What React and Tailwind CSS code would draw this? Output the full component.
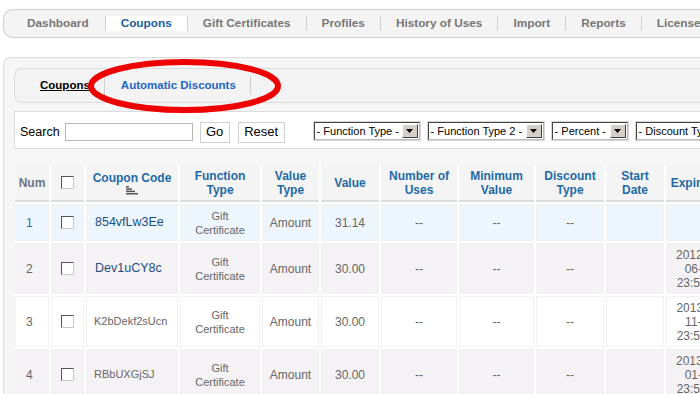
import React from 'react';

const navItems = ['Dashboard', 'Coupons', 'Gift Certificates', 'Profiles', 'History of Uses', 'Import', 'Reports', 'License'];

const cols = 'grid grid-cols-[34px_33px_92px_80px_57px_58px_76px_75px_68px_58px_68px] gap-x-[2px]';

const rows = [
  { num: '1', code: '854vfLw3Ee', link: true, value: '31.14', exp: null, bg: 'bg-[#eef6fd]', h: 'h-[37px]', numColor: 'text-[#2f7196]' },
  { num: '2', code: 'Dev1uCY8c', link: true, value: '30.00', exp: ['2012-06-', '06-30', '23:59:59'], bg: 'bg-[#f5f2f5]', h: 'h-[51px]', numColor: 'text-[#666]' },
  { num: '3', code: 'K2bDekf2sUcn', link: false, value: '30.00', exp: ['2013-11-', '11-30', '23:59:59'], bg: 'bg-white', h: 'h-[51px]', numColor: 'text-[#666]' },
  { num: '4', code: 'RBbUXGjSJ', link: false, value: '30.00', exp: ['2013-01-', '01-31', '23:59:59'], bg: 'bg-[#f5f2f5]', h: 'h-[51px]', numColor: 'text-[#666]' },
];

function Checkbox() {
  return (
    <span className="inline-block w-[13px] h-[13px] bg-white border border-t-[#555] border-l-[#555] border-b-[#c8c8c8] border-r-[#c8c8c8]" />
  );
}

function FakeSelect({ label, width }) {
  return (
    <div
      className="flex items-stretch h-[18px] bg-white border border-t-[#444] border-l-[#444] border-b-[#bbb] border-r-[#bbb] shadow-[0_0_0_1px_#d6d6d6]"
      style={{ width }}
    >
      <span className="flex-1 pl-[2px] text-[11px] leading-[16px] text-black whitespace-nowrap overflow-hidden">{label}</span>
      <span className="w-[16px] my-[1px] mr-[1px] flex items-center justify-center bg-[#d4d0c8] border border-t-[#fff] border-l-[#fff] border-b-[#404040] border-r-[#404040]">
        <svg width="7" height="4" viewBox="0 0 7 4"><path d="M0 0h7L3.5 4z" fill="#000" /></svg>
      </span>
    </div>
  );
}

function SortIcon() {
  return (
    <svg width="12" height="9" viewBox="0 0 12 9" className="mx-auto mt-[1px]">
      <rect x="0" y="0" width="3" height="1.5" fill="#555" />
      <rect x="0" y="2.3" width="6" height="1.5" fill="#555" />
      <rect x="0" y="4.6" width="9" height="1.5" fill="#555" />
      <rect x="0" y="7" width="12" height="1.5" fill="#555" />
    </svg>
  );
}

export default function App() {
  const hd = 'bg-[#f4f4f4] border-b-2 border-[#dcdcdc] flex flex-col items-center justify-center text-center text-[12px] leading-[14px] font-bold';
  return (
    <div className="relative w-[700px] h-[394px] overflow-hidden bg-white font-['Liberation_Sans',Arial,sans-serif]">
      {/* top navigation */}
      <div className="mt-[9px] ml-[3px] w-[760px] h-[29px] flex items-center rounded-l-[10px] border border-r-0 border-[#cfcfcf] bg-[#f4f4f4] whitespace-nowrap">
        {navItems.map((item, i) => (
          <div
            key={item}
            className={`h-[15px] flex items-center text-[11.8px] font-bold ${i === 0 ? 'pl-[23px] pr-[16px]' : 'px-[15px] border-l border-[#cfcfcf]'} ${item === 'Coupons' ? 'bg-white text-[#1b5f9e]' : 'text-[#777]'}`}
          >
            {item}
          </div>
        ))}
      </div>

      {/* main panel */}
      <div className="mt-[19px] ml-[3px] w-[760px] h-[400px] rounded-tl-[8px] border border-r-0 border-[#dcdcdc] bg-[#f6f6f6] pl-[10px] pt-[10px]">
        {/* sub tabs */}
        <div className="h-[35px] flex items-center rounded-l-[8px] border border-r-0 border-[#dcdcdc] bg-[#f3f3f3] whitespace-nowrap">
          <div className="pl-[25px] pr-[14px] text-[11.5px] font-bold text-black underline">Coupons</div>
          <div className="h-[19px] border-l border-[#cfcfcf]" />
          <div className="pl-[16px] pr-[14px] text-[11.5px] font-bold text-[#2166c4]">Automatic Discounts</div>
          <div className="h-[19px] border-l border-[#cfcfcf]" />
        </div>

        {/* search bar */}
        <div className="mt-[8px] h-[38px] flex items-center bg-white border border-r-0 border-[#dcdcdc] pl-[5px] pt-[4px] whitespace-nowrap">
          <span className="text-[12.5px] text-black">Search</span>
          <span className="ml-[5px] w-[128px] h-[18px] border border-[#b5b5b5] bg-white" />
          <span className="ml-[7px] w-[30px] h-[21px] flex items-center justify-center border border-[#cfcfcf] bg-white text-[13px] text-black">Go</span>
          <span className="ml-[8px] w-[47px] h-[21px] flex items-center justify-center border border-[#cfcfcf] bg-white text-[13px] text-black">Reset</span>
          <div className="ml-[29px] flex gap-[8px] -mt-[3px]">
            <FakeSelect label="- Function Type -" width={106} />
            <FakeSelect label="- Function Type 2 -" width={116} />
            <FakeSelect label="- Percent -" width={76} />
            <FakeSelect label="- Discount Type -" width={120} />
          </div>
        </div>

        {/* table */}
        <div className="mt-[16px] ml-[1px] bg-white flex flex-col gap-y-[2px] w-[740px]">
          <div className={`${cols} h-[37px]`}>
            <div className={`${hd} text-[#6a7888]`}>Num</div>
            <div className={hd}><Checkbox /></div>
            <div className={`${hd} text-[#1e6aa6] justify-start pt-[6px]`}>
              <span>Coupon Code</span>
              <SortIcon />
            </div>
            <div className={`${hd} text-[#1e6aa6]`}><span>Function</span><span>Type</span></div>
            <div className={`${hd} text-[#1e6aa6]`}><span>Value</span><span>Type</span></div>
            <div className={`${hd} text-[#1e6aa6]`}>Value</div>
            <div className={`${hd} text-[#1e6aa6]`}><span>Number of</span><span>Uses</span></div>
            <div className={`${hd} text-[#1e6aa6]`}><span>Minimum</span><span>Value</span></div>
            <div className={`${hd} text-[#1e6aa6]`}><span>Discount</span><span>Type</span></div>
            <div className={`${hd} text-[#1e6aa6]`}><span>Start</span><span>Date</span></div>
            <div className={`${hd} text-[#1e6aa6] whitespace-nowrap`}>Expiration</div>
          </div>

          {rows.map((r) => {
            const cell = `${r.bg} border border-[#f1f1f1] flex items-center justify-center text-center`;
            const gray = 'text-[12px] text-[#666]';
            return (
              <div key={r.num} className={`${cols} ${r.h}`}>
                <div className={`${cell} justify-start pl-[10px] text-[12px] ${r.numColor}`}>{r.num}</div>
                <div className={cell}><Checkbox /></div>
                <div className={`${cell} justify-start ${r.link ? 'pl-[8px] text-[12.5px] text-[#1a4f86]' : 'pl-[7px] text-[11px] text-[#666]'}`}>{r.code}</div>
                <div className={`${cell} flex-col text-[11px] leading-[14px] text-[#666]`}><span>Gift</span><span>Certificate</span></div>
                <div className={`${cell} ${gray}`}>Amount</div>
                <div className={`${cell} ${gray}`}>{r.value}</div>
                <div className={`${cell} ${gray}`}>--</div>
                <div className={`${cell} ${gray}`}>--</div>
                <div className={`${cell} ${gray}`}>--</div>
                <div className={cell} />
                <div className={`${cell} ${gray} flex-col leading-[14px]`}>
                  {r.exp && r.exp.map((l) => <span key={l}>{l}</span>)}
                </div>
              </div>
            );
          })}
        </div>
      </div>

      {/* red annotation ellipse */}
      <svg className="absolute left-0 top-0 pointer-events-none" width="700" height="394">
        <ellipse cx="184.5" cy="86" rx="93.5" ry="24" fill="none" stroke="#ee0000" strokeWidth="6" />
      </svg>
    </div>
  );
}
